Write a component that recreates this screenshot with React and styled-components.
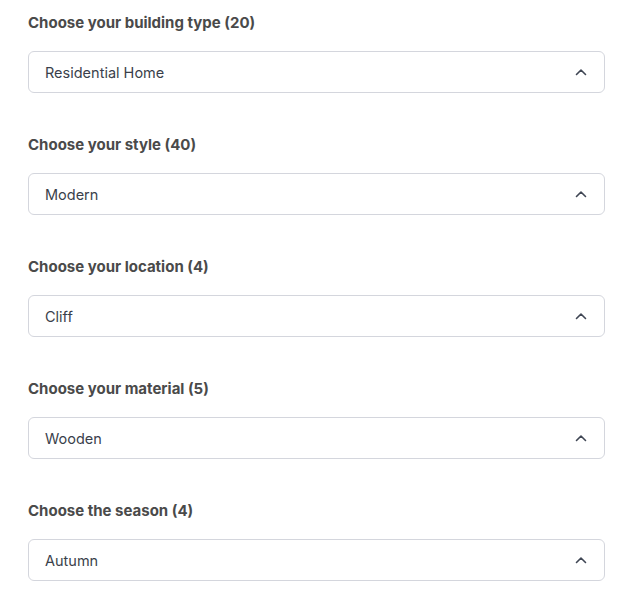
import React from 'react';
import styled, { createGlobalStyle } from 'styled-components';

const GlobalStyle = createGlobalStyle`
  html, body {
    margin: 0;
    padding: 0;
    background: #ffffff;
  }
  body {
    font-family: Inter, "Noto Sans", sans-serif;
  }
`;

const Form = styled.div`
  display: flex;
  flex-direction: column;
  gap: 42px;
  padding: 13px 27px 0 28px;
  width: 577px;
`;

const Field = styled.div`
  display: flex;
  flex-direction: column;
  gap: 18px;
`;

const Label = styled.div`
  font-size: 15px;
  line-height: 20px;
  font-weight: 700;
  color: #4a4a4a;
`;

const SelectBox = styled.div`
  display: flex;
  align-items: center;
  justify-content: space-between;
  box-sizing: border-box;
  height: 42px;
  padding: 0 17px 0 16px;
  border: 1px solid #d4d6dd;
  border-radius: 6px;
  background: #fff;
  font-size: 14.5px;
  color: #3a3f4b;
`;

const Chevron = () => (
  <svg width="12" height="8" viewBox="0 0 12 8" fill="none">
    <path d="M1.5 6.5L6 2L10.5 6.5" stroke="#3f4654" strokeWidth="1.6" strokeLinecap="round" strokeLinejoin="round" />
  </svg>
);

const fields = [
  { label: 'Choose your building type (20)', value: 'Residential Home' },
  { label: 'Choose your style (40)', value: 'Modern' },
  { label: 'Choose your location (4)', value: 'Cliff' },
  { label: 'Choose your material (5)', value: 'Wooden' },
  { label: 'Choose the season (4)', value: 'Autumn' },
];

export default function App() {
  return (
    <>
      <GlobalStyle />
      <Form>
        {fields.map((f) => (
          <Field key={f.label}>
            <Label>{f.label}</Label>
            <SelectBox>
              <span>{f.value}</span>
              <Chevron />
            </SelectBox>
          </Field>
        ))}
      </Form>
    </>
  );
}
